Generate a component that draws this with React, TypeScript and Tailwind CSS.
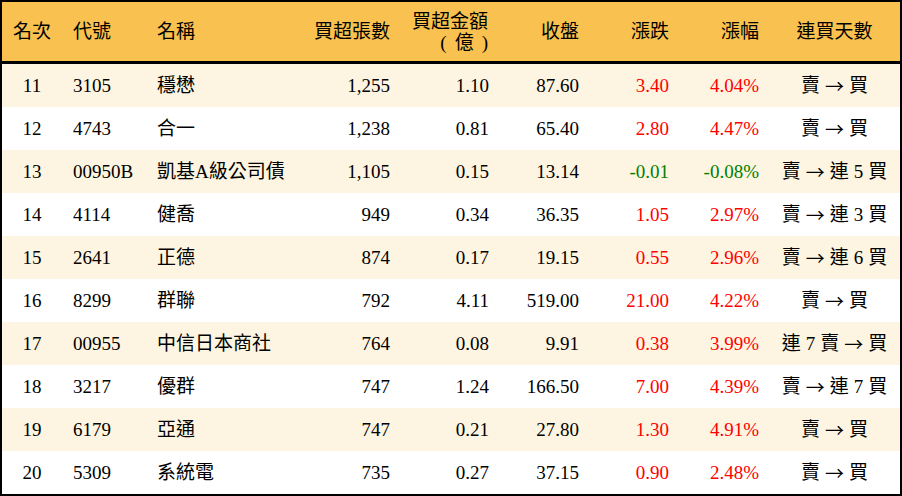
const rows = [
  { rank: 11, code: "3105", name: "穩懋", vol: "1,255", amt: "1.10", close: "87.60", chg: "3.40", pct: "4.04%", days: ["賣", "→", "買"] },
  { rank: 12, code: "4743", name: "合一", vol: "1,238", amt: "0.81", close: "65.40", chg: "2.80", pct: "4.47%", days: ["賣", "→", "買"] },
  { rank: 13, code: "00950B", name: "凱基A級公司債", vol: "1,105", amt: "0.15", close: "13.14", chg: "-0.01", pct: "-0.08%", days: ["賣", "→", "連", "5", "買"] },
  { rank: 14, code: "4114", name: "健喬", vol: "949", amt: "0.34", close: "36.35", chg: "1.05", pct: "2.97%", days: ["賣", "→", "連", "3", "買"] },
  { rank: 15, code: "2641", name: "正德", vol: "874", amt: "0.17", close: "19.15", chg: "0.55", pct: "2.96%", days: ["賣", "→", "連", "6", "買"] },
  { rank: 16, code: "8299", name: "群聯", vol: "792", amt: "4.11", close: "519.00", chg: "21.00", pct: "4.22%", days: ["賣", "→", "買"] },
  { rank: 17, code: "00955", name: "中信日本商社", vol: "764", amt: "0.08", close: "9.91", chg: "0.38", pct: "3.99%", days: ["連", "7", "賣", "→", "買"] },
  { rank: 18, code: "3217", name: "優群", vol: "747", amt: "1.24", close: "166.50", chg: "7.00", pct: "4.39%", days: ["賣", "→", "連", "7", "買"] },
  { rank: 19, code: "6179", name: "亞通", vol: "747", amt: "0.21", close: "27.80", chg: "1.30", pct: "4.91%", days: ["賣", "→", "買"] },
  { rank: 20, code: "5309", name: "系統電", vol: "735", amt: "0.27", close: "37.15", chg: "0.90", pct: "2.48%", days: ["賣", "→", "買"] },
];

const cols = "grid grid-cols-[60px_83px_155px_100px_99px_90px_90px_90px_131px] items-center";

function Days({ parts }: { parts: string[] }) {
  return (
    <div className="flex justify-center items-center gap-[5px] whitespace-nowrap">
      {parts.map((p, i) =>
        p === "→" ? (
          <span key={i} style={{ fontFamily: '"Noto Sans CJK TC", sans-serif' }}>
            →
          </span>
        ) : (
          <span key={i}>{p}</span>
        )
      )}
    </div>
  );
}

export default function App() {
  return (
    <div
      className="w-[902px] h-[496px] border-2 border-black bg-white text-black text-[19px] leading-[21px]"
      style={{ fontFamily: '"Liberation Serif", "Noto Sans CJK TC", serif' }}
    >
      <div className={`${cols} h-[62px] bg-[#f9c14f] border-b-[3px] border-black`}>
        <div className="text-center">名次</div>
        <div className="pl-[11px]">代號</div>
        <div className="pl-[12px]">名稱</div>
        <div className="text-right pr-[10px]">買超張數</div>
        <div className="pr-[11px] flex flex-col items-end">
          <span>買超金額</span>
          <span className="flex gap-[8px]">
            <span>(</span>
            <span>億</span>
            <span>)</span>
          </span>
        </div>
        <div className="text-right pr-[10px]">收盤</div>
        <div className="text-right pr-[10px]">漲跌</div>
        <div className="text-right pr-[10px]">漲幅</div>
        <div className="text-center">連買天數</div>
      </div>
      {rows.map((r, i) => {
        const color = r.chg.startsWith("-") ? "text-[#008000]" : "text-[#ff0000]";
        return (
          <div key={r.rank} className={`${cols} h-[43px] ${i % 2 === 0 ? "bg-[#fdf5e1]" : "bg-white"}`}>
            <div className="text-center">{r.rank}</div>
            <div className="pl-[11px]">{r.code}</div>
            <div className="pl-[12px] whitespace-nowrap">{r.name}</div>
            <div className="text-right pr-[10px]">{r.vol}</div>
            <div className="text-right pr-[10px]">{r.amt}</div>
            <div className="text-right pr-[10px]">{r.close}</div>
            <div className={`text-right pr-[10px] ${color}`}>{r.chg}</div>
            <div className={`text-right pr-[10px] ${color}`}>{r.pct}</div>
            <Days parts={r.days} />
          </div>
        );
      })}
    </div>
  );
}
